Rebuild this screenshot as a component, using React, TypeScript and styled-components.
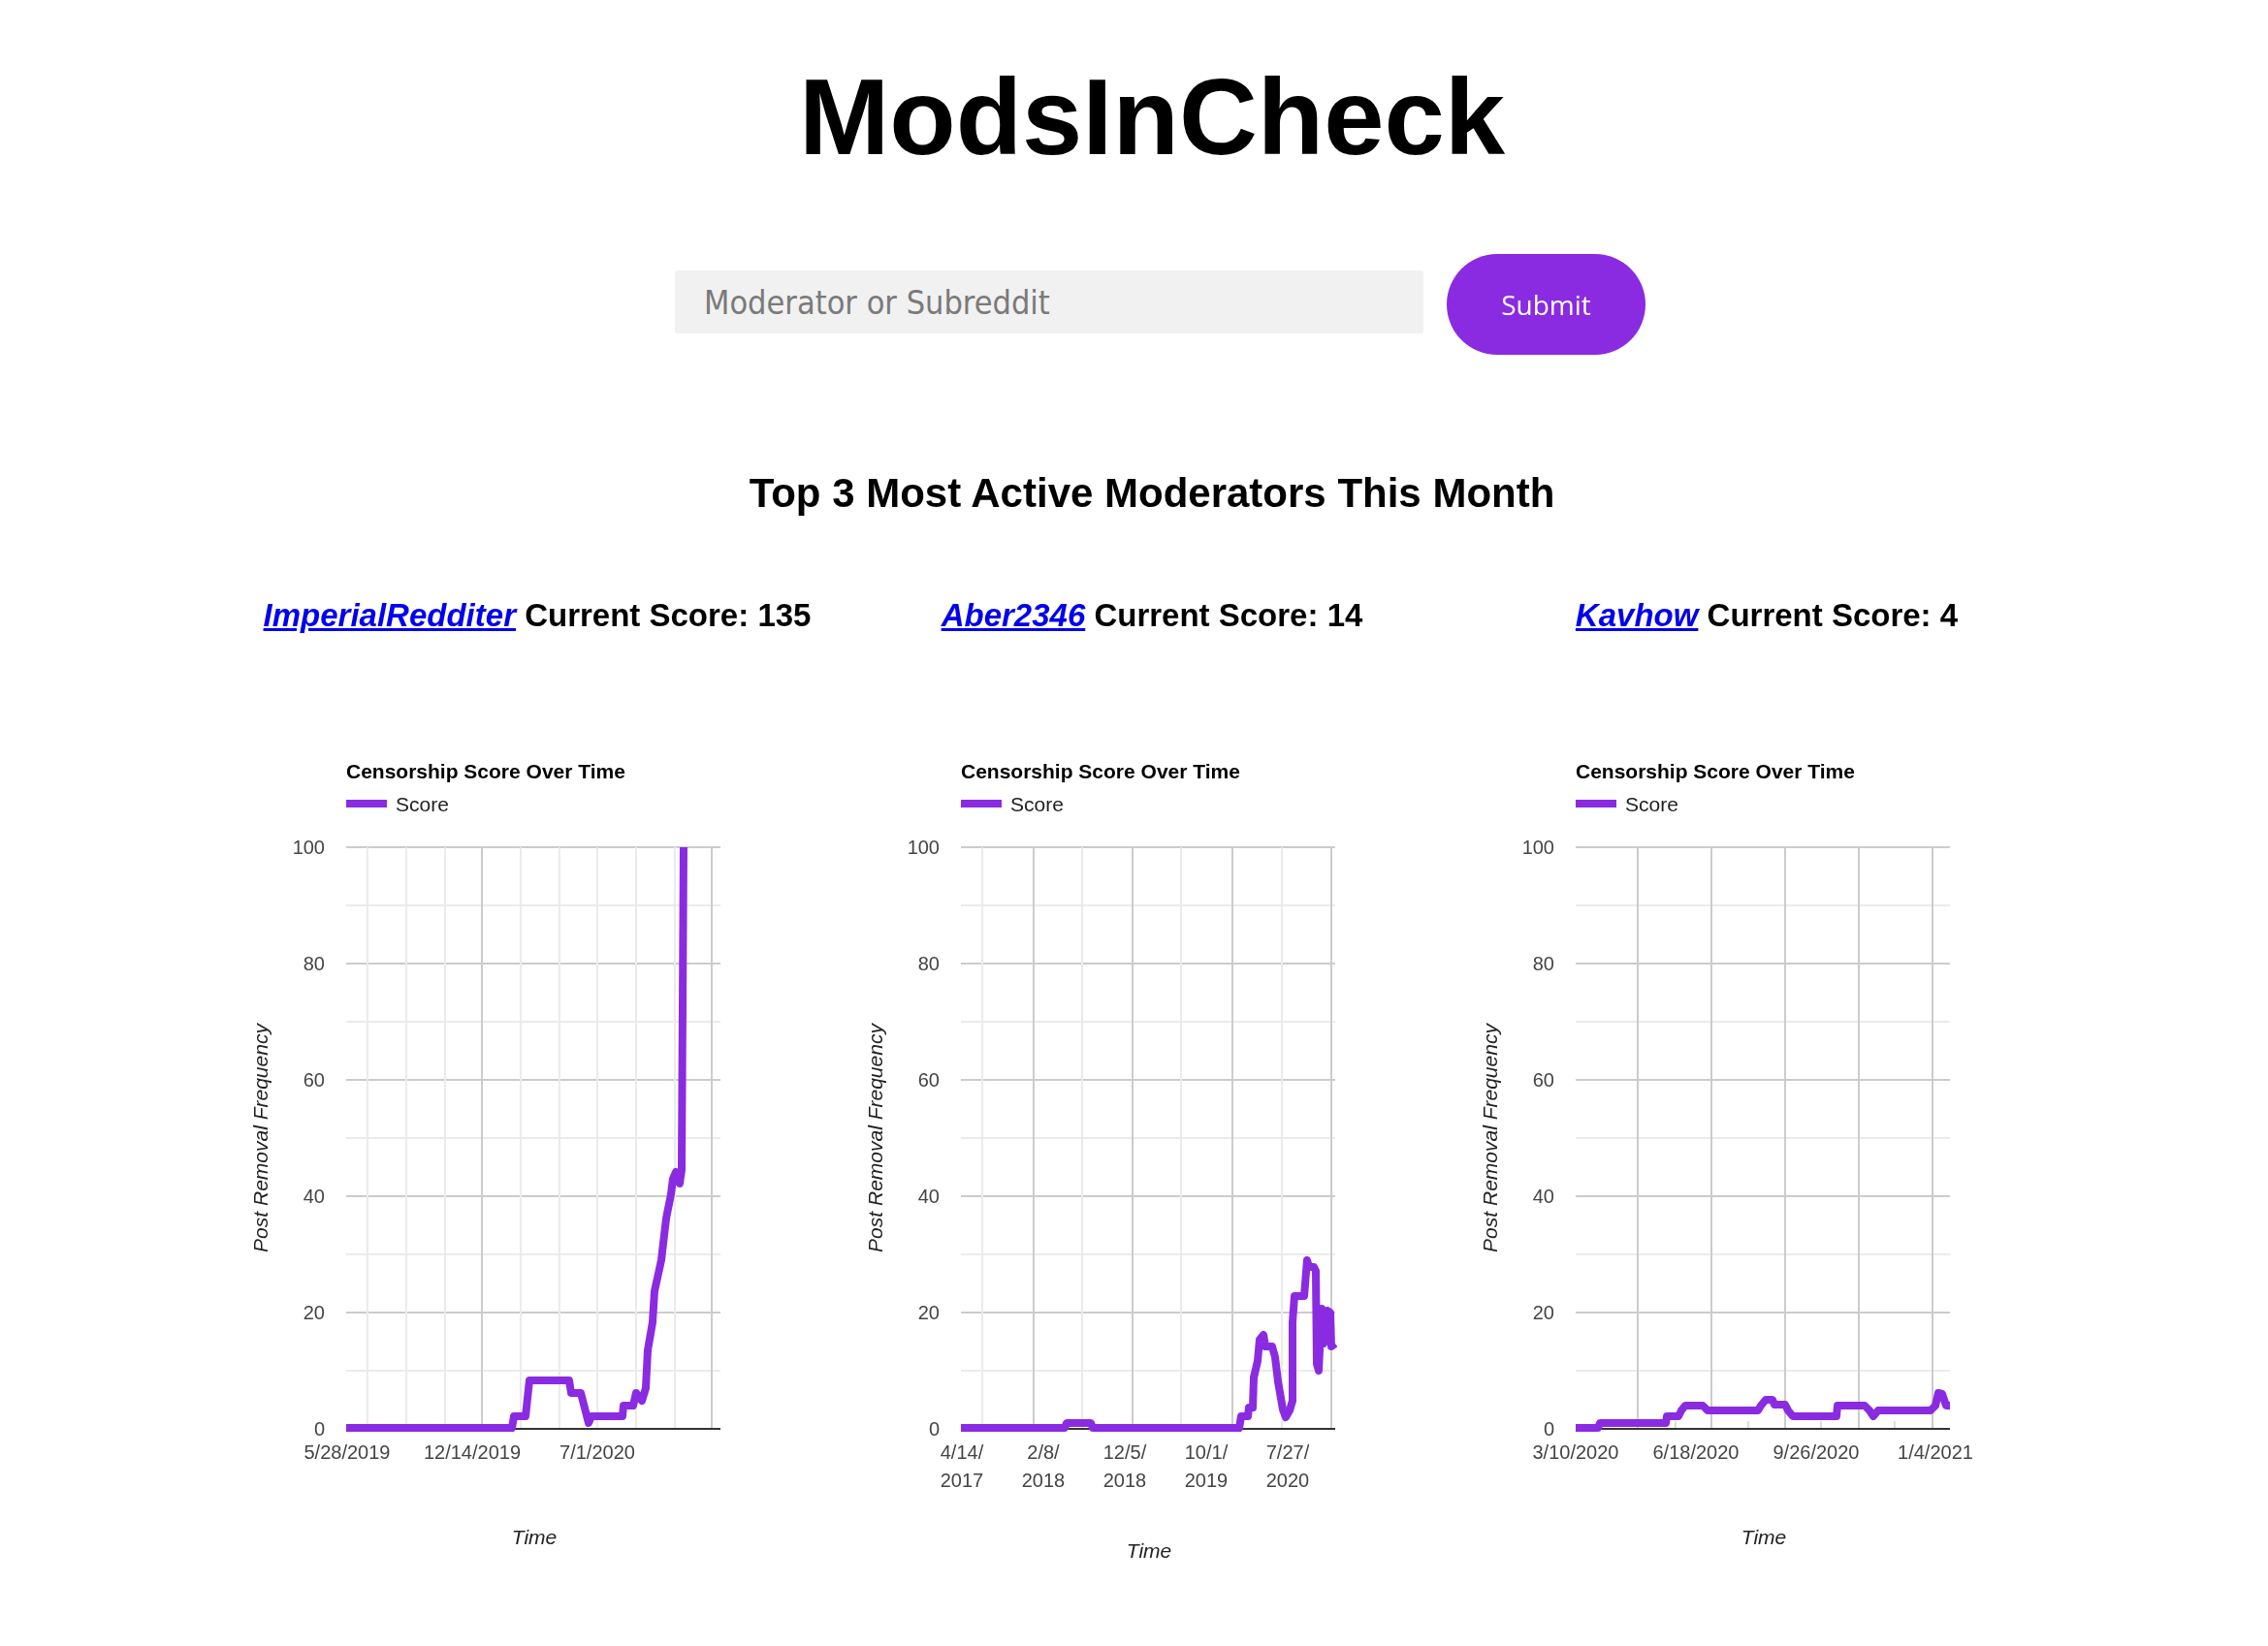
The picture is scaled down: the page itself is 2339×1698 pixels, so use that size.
import styled, { createGlobalStyle } from 'styled-components'

const PURPLE = '#8a2be2'

type Pt = [number, number]

interface ChartSpec {
  points: Pt[]
  vlines: { x: number; strong?: boolean }[]
  ticks?: number[]
  labels: { x: number; lines: string[] }[]
  timeY: number
}

const mods: { name: string; score: number; chart: ChartSpec }[] = [
  {
    name: 'ImperialRedditer',
    score: 135,
    chart: {
      points: [
        [120, 773], [291, 773], [293, 761], [305, 761], [309, 724], [350, 724],
        [352, 737], [362, 737], [370, 768], [373, 761], [405, 761], [406, 750],
        [416, 750], [419, 737], [425, 745], [429, 732], [431, 693], [436, 664],
        [438, 632], [445, 600], [450, 557], [455, 532], [457, 516], [460, 509],
        [464, 521], [466, 507], [468, 174],
      ],
      vlines: [
        { x: 142 }, { x: 182 }, { x: 222 }, { x: 260, strong: true }, { x: 300 },
        { x: 340 }, { x: 379 }, { x: 419 }, { x: 459 }, { x: 497, strong: true },
      ],
      labels: [
        { x: 121, lines: ['5/28/2019'] },
        { x: 250, lines: ['12/14/2019'] },
        { x: 379, lines: ['7/1/2020'] },
      ],
      timeY: 893,
    },
  },
  {
    name: 'Aber2346',
    score: 14,
    chart: {
      points: [
        [120, 773], [227, 773], [229, 768], [254, 768], [256, 773], [407, 773],
        [409, 761], [416, 761], [417, 752], [421, 752], [422, 721], [426, 704],
        [428, 682], [432, 677], [434, 689], [441, 689], [444, 700], [447, 725],
        [452, 754], [455, 762], [459, 755], [462, 745], [462, 664], [464, 637],
        [474, 637], [477, 600], [479, 607], [484, 607], [486, 611], [487, 707],
        [489, 714], [492, 650], [494, 686], [498, 652], [501, 654], [502, 689],
        [506, 686],
      ],
      vlines: [
        { x: 142 }, { x: 195, strong: true }, { x: 245 }, { x: 297, strong: true },
        { x: 347 }, { x: 400, strong: true }, { x: 451 }, { x: 502, strong: true },
      ],
      labels: [
        { x: 121, lines: ['4/14/', '2017'] },
        { x: 205, lines: ['2/8/', '2018'] },
        { x: 289, lines: ['12/5/', '2018'] },
        { x: 373, lines: ['10/1/', '2019'] },
        { x: 457, lines: ['7/27/', '2020'] },
      ],
      timeY: 907,
    },
  },
  {
    name: 'Kavhow',
    score: 4,
    chart: {
      points: [
        [120, 773], [143, 773], [145, 768], [213, 768], [214, 761], [226, 761],
        [229, 755], [233, 750], [251, 750], [256, 755], [308, 755], [311, 750],
        [316, 744], [323, 744], [325, 749], [336, 749], [339, 755], [344, 761],
        [389, 761], [390, 750], [418, 750], [423, 755], [427, 761], [432, 755],
        [486, 755], [491, 750], [494, 737], [498, 738], [502, 750], [506, 750],
      ],
      vlines: [
        { x: 184, strong: true }, { x: 260, strong: true }, { x: 336, strong: true },
        { x: 412, strong: true }, { x: 488, strong: true },
      ],
      ticks: [223, 298, 373, 449],
      labels: [
        { x: 120, lines: ['3/10/2020'] },
        { x: 244, lines: ['6/18/2020'] },
        { x: 368, lines: ['9/26/2020'] },
        { x: 491, lines: ['1/4/2021'] },
      ],
      timeY: 893,
    },
  },
]

// plot box inside each chart svg
const PLOT_L = 120
const PLOT_R = 506
const PLOT_T = 174
const PLOT_B = 774

function ScoreChart({ chart }: { chart: ChartSpec }) {
  const hLines = Array.from({ length: 10 }, (_, i) => (i + 1) * 10)
  const yLabels = [0, 20, 40, 60, 80, 100]
  const yFor = (v: number) => PLOT_B - (v * (PLOT_B - PLOT_T)) / 100

  return (
    <ChartSvg viewBox="0 0 634 920" width={634} height={920}>
      <ChartTitle x={PLOT_L} y={103}>Censorship Score Over Time</ChartTitle>
      <rect x={PLOT_L} y={125} width={42} height={8} fill={PURPLE} />
      <LegendText x={171} y={137}>Score</LegendText>

      {hLines.map(v => (
        <line
          key={v}
          x1={PLOT_L}
          x2={PLOT_R}
          y1={yFor(v)}
          y2={yFor(v)}
          stroke={v % 20 === 0 ? '#cccccc' : '#ebebeb'}
          strokeWidth={2}
        />
      ))}
      {chart.vlines.map(l => (
        <line
          key={l.x}
          x1={l.x}
          x2={l.x}
          y1={PLOT_T}
          y2={PLOT_B}
          stroke={l.strong ? '#cccccc' : '#ebebeb'}
          strokeWidth={2}
        />
      ))}
      {chart.ticks?.map(x => (
        <line key={x} x1={x} x2={x} y1={PLOT_B - 8} y2={PLOT_B} stroke="#dddddd" strokeWidth={2} />
      ))}
      <line x1={PLOT_L} x2={PLOT_R} y1={PLOT_B} y2={PLOT_B} stroke="#333333" strokeWidth={2} />

      {yLabels.map(v => (
        <AxisText key={v} x={98} y={yFor(v) + 7} textAnchor="end">
          {v}
        </AxisText>
      ))}
      {chart.labels.map(l => (
        <AxisText key={l.x} x={l.x} y={805} textAnchor="middle">
          {l.lines.map((t, i) => (
            <tspan key={t} x={l.x} dy={i === 0 ? 0 : 29}>
              {t}
            </tspan>
          ))}
        </AxisText>
      ))}

      <AxisTitle x={39} y={474} textAnchor="middle" transform="rotate(-90 39 474)">
        Post Removal Frequency
      </AxisTitle>
      <AxisTitle x={314} y={chart.timeY} textAnchor="middle">
        Time
      </AxisTitle>

      <polyline
        points={chart.points.map(p => p.join(',')).join(' ')}
        fill="none"
        stroke={PURPLE}
        strokeWidth={8}
        strokeLinejoin="round"
      />
    </ChartSvg>
  )
}

export default function App() {
  return (
    <>
      <GlobalStyle />
      <Main>
        <Title>ModsInCheck</Title>
        <SearchForm onSubmit={e => e.preventDefault()}>
          <SearchInput autoFocus placeholder="Moderator or Subreddit" />
          <SubmitButton type="submit">Submit</SubmitButton>
        </SearchForm>
        <SectionHeading>Top 3 Most Active Moderators This Month</SectionHeading>
        <Leaderboard>
          {mods.map(mod => (
            <ModColumn key={mod.name}>
              <ModHeader>
                <ModLink href="#">{mod.name}</ModLink> Current Score: {mod.score}
              </ModHeader>
              <ScoreChart chart={mod.chart} />
            </ModColumn>
          ))}
        </Leaderboard>
      </Main>
    </>
  )
}

const GlobalStyle = createGlobalStyle`
  html, body {
    margin: 0;
    padding: 0;
    background: #ffffff;
  }
  body {
    font-family: 'Liberation Sans', Arial, sans-serif;
    color: #000000;
  }
`

const Main = styled.main`
  padding-left: 37px;
  text-align: center;
`

const Title = styled.h1`
  margin: 0;
  padding-top: 65px;
  font-size: 112px;
  line-height: 112px;
  font-weight: 700;
`

const SearchForm = styled.form`
  display: flex;
  justify-content: center;
  align-items: flex-start;
  gap: 24px;
  margin-top: 85px;
  margin-left: 17px;
  height: 104px;
`

const SearchInput = styled.input`
  box-sizing: border-box;
  width: 772px;
  height: 65px;
  margin-top: 17px;
  padding: 0 0 0 30px;
  border: none;
  border-radius: 3px;
  background: #f1f1f1;
  font-family: 'DejaVu Sans Condensed', 'DejaVu Sans', sans-serif;
  font-stretch: condensed;
  font-size: 34px;
  color: #222222;
  caret-color: #000000;
  outline: none;

  &::placeholder {
    color: #7a7a7a;
  }
`

const SubmitButton = styled.button`
  width: 205px;
  height: 104px;
  border: none;
  border-radius: 52px;
  background: ${PURPLE};
  color: #ffffff;
  font-family: 'Open Sans', 'Noto Sans', sans-serif;
  font-size: 28px;
  cursor: pointer;
`

const SectionHeading = styled.h2`
  margin: 122px 0 0;
  font-size: 42px;
  line-height: 42px;
  font-weight: 700;
`

const Leaderboard = styled.section`
  display: grid;
  grid-template-columns: repeat(3, 634px);
  justify-content: center;
  margin-top: 88px;
`

const ModColumn = styled.div`
  display: flex;
  flex-direction: column;
  align-items: center;
`

const ModHeader = styled.h3`
  margin: 0;
  font-size: 33px;
  line-height: 33px;
  font-weight: 700;
  white-space: nowrap;
`

const ModLink = styled.a`
  color: #0000ee;
  font-style: italic;
  text-decoration: underline;
`

const ChartSvg = styled.svg`
  display: block;
  margin-top: 49px;
  font-family: 'Liberation Sans', Arial, sans-serif;
`

const ChartTitle = styled.text`
  font-size: 21px;
  font-weight: 700;
  fill: #000000;
`

const LegendText = styled.text`
  font-size: 21px;
  fill: #222222;
`

const AxisText = styled.text`
  font-size: 20px;
  fill: #444444;
`

const AxisTitle = styled.text`
  font-size: 21px;
  font-style: italic;
  fill: #222222;
`
